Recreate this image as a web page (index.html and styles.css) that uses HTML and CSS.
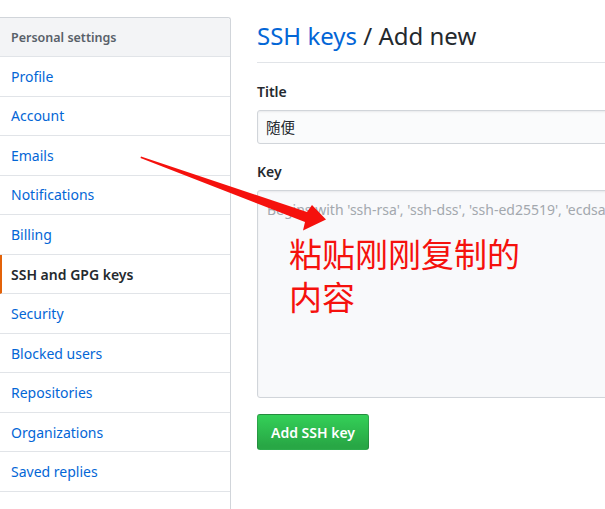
FILE: index.html
```html
<!DOCTYPE html>
<html lang="zh">
<head>
<meta charset="utf-8">
<title>SSH keys / Add new</title>
<link rel="stylesheet" href="styles.css">
</head>
<body>
<div class="page">
  <nav class="menu">
    <div class="menu-heading">Personal settings</div>
    <a class="menu-item" href="#">Profile</a>
    <a class="menu-item" href="#">Account</a>
    <a class="menu-item" href="#">Emails</a>
    <a class="menu-item" href="#">Notifications</a>
    <a class="menu-item" href="#">Billing</a>
    <a class="menu-item selected" href="#">SSH and GPG keys</a>
    <a class="menu-item" href="#">Security</a>
    <a class="menu-item" href="#">Blocked users</a>
    <a class="menu-item" href="#">Repositories</a>
    <a class="menu-item" href="#">Organizations</a>
    <a class="menu-item" href="#">Saved replies</a>
    <div class="menu-item tail"></div>
  </nav>
  <main class="main">
    <h2 class="subhead"><a href="#" class="crumb">SSH keys</a> / Add new</h2>
    <form class="form">
      <label class="label">Title</label>
      <div class="input">随便</div>
      <label class="label key-label">Key</label>
      <div class="textarea"><span class="placeholder">Begins with 'ssh-rsa', 'ssh-dss', 'ssh-ed25519', 'ecdsa-sha2-nistp256'</span></div>
      <button type="button" class="btn">Add SSH key</button>
    </form>
  </main>
</div>
<div class="note">粘贴刚刚复制的<br>内容</div>
<svg class="arrow" width="605" height="509" viewBox="0 0 605 509">
  <polygon fill="#f5110d" points="141,156.5 307,212 312,205 326,219.5 303,230.5 305,222 140.5,158"/>
</svg>
</body>
</html>
```
FILE: styles.css
```css
html, body {
  margin: 0;
  padding: 0;
  background: #fff;
  overflow: hidden;
}
body {
  width: 605px;
  height: 509px;
  position: relative;
  font-family: "Noto Sans", "Noto Sans CJK SC", sans-serif;
  color: #24292e;
}
.page {
  display: flex;
  align-items: flex-start;
}
.menu {
  flex: 0 0 231px;
  margin-top: 17px;
  border-top: 1px solid #d1d5da;
  border-right: 1px solid #d1d5da;
  border-top-right-radius: 3px;
  box-sizing: border-box;
  display: flex;
  flex-direction: column;
}
.menu-heading {
  height: 39px;
  box-sizing: border-box;
  padding-left: 11px;
  display: flex;
  align-items: center;
  background: #f3f4f6;
  color: #586069;
  font-size: 12.5px;
  font-weight: 600;
  border-bottom: 1px solid #e1e4e8;
  border-top-right-radius: 3px;
}
.menu-item {
  height: 39.55px;
  box-sizing: border-box;
  padding-left: 11px;
  display: flex;
  align-items: center;
  color: #0366d6;
  text-decoration: none;
  font-size: 14px;
  border-bottom: 1px solid #e1e4e8;
}
.menu-item.selected {
  color: #24292e;
  font-weight: 600;
  border-left: 2px solid #e36209;
  padding-left: 9px;
}
.menu-item.tail {
  height: 30px;
  border-bottom: none;
}
.main {
  flex: 0 0 420px;
  margin-left: 26px;
}
.subhead {
  margin: 0;
  padding: 21px 0 11px;
  height: 63px;
  box-sizing: border-box;
  font-size: 24px;
  font-weight: 400;
  line-height: 30px;
  border-bottom: 1px solid #e1e4e8;
  color: #24292e;
}
.crumb {
  color: #0366d6;
  text-decoration: none;
}
.form {
  display: flex;
  flex-direction: column;
  align-items: flex-start;
}
.label {
  font-size: 14px;
  font-weight: 600;
  line-height: 20px;
  margin-top: 19px;
  margin-bottom: 8px;
}
.key-label {
  margin-top: 18px;
}
.input {
  width: 420px;
  height: 34px;
  box-sizing: border-box;
  border: 1px solid #d1d5da;
  border-radius: 3px;
  background: #fafbfc;
  box-shadow: inset 0 1px 2px rgba(27,31,35,.075);
  padding-left: 8px;
  font-size: 14.5px;
  line-height: 32px;
  color: #24292e;
  font-family: "Noto Sans CJK SC", sans-serif;
}
.textarea {
  width: 420px;
  height: 208px;
  box-sizing: border-box;
  border: 1px solid #d1d5da;
  border-radius: 3px;
  background: #f8f9fb;
  box-shadow: inset 0 1px 2px rgba(27,31,35,.075);
  padding: 9px 9px;
  font-size: 14px;
  line-height: 20px;
  white-space: nowrap;
  overflow: hidden;
}
.placeholder {
  color: #a3a8ae;
}
.btn {
  margin-top: 16px;
  width: 112px;
  height: 36px;
  border: 1px solid rgba(27,31,35,.2);
  border-radius: 3px;
  background: linear-gradient(#34d058, #28a745 90%);
  color: #fff;
  font-family: "Noto Sans", sans-serif;
  font-size: 14px;
  font-weight: 600;
  padding: 0;
}
.note {
  position: absolute;
  left: 289px;
  top: 232px;
  font-family: "Noto Sans CJK SC", sans-serif;
  font-size: 33px;
  line-height: 43px;
  color: #f5110d;
}
.arrow {
  position: absolute;
  left: 0;
  top: 0;
  pointer-events: none;
}
```
